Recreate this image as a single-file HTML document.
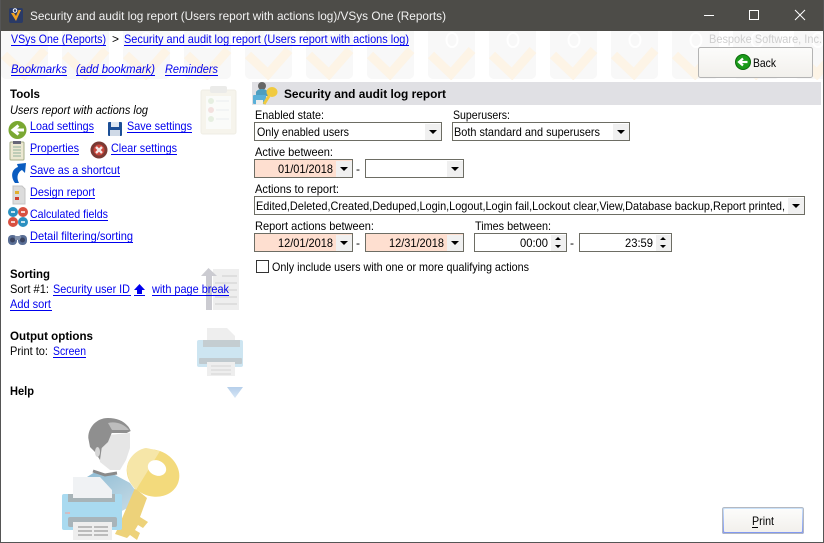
<!DOCTYPE html>
<html><head><meta charset="utf-8"><style>
html,body{margin:0;padding:0;background:#fff;overflow:hidden}
svg{display:block}
text{font-family:"Liberation Sans",sans-serif;font-size:12px;fill:#000}
.l{fill:#0000ee}.b{font-weight:bold}.i{font-style:italic}
.c rect{shape-rendering:crispEdges}
</style></head><body>
<svg width="824" height="543" viewBox="0 0 824 543" xmlns="http://www.w3.org/2000/svg">
<defs>
<pattern id="t" x="1" y="31" width="61" height="49" patternUnits="userSpaceOnUse">
<rect x="0" y="-4" width="47" height="52" rx="5" fill="#f8f8f8"/>
<path d="M3 24L23 43L44 19" fill="none" stroke="#fdf4e6" stroke-width="9"/>
<ellipse cx="24" cy="9" rx="5.500" ry="7" fill="none" stroke="#fff" stroke-width="2"/>
</pattern>
<linearGradient id="pb" x1="0" y1="0" x2="0" y2="1"><stop offset="0" stop-color="#cfe6fb"/><stop offset="1" stop-color="#7d94f0"/></linearGradient>
<linearGradient id="bg" x1="0" y1="0" x2="0" y2="1"><stop offset="0" stop-color="#fcfcfb"/><stop offset="1" stop-color="#f2f0ec"/></linearGradient>
<linearGradient id="sh" x1="0" y1="0" x2="1" y2="1"><stop offset="0" stop-color="#88b8d2"/><stop offset="1" stop-color="#c8dce6"/></linearGradient>
<linearGradient id="tri" x1="0" y1="0" x2="0" y2="1"><stop offset="0" stop-color="#b6cfea"/><stop offset="1" stop-color="#d6e6f6"/></linearGradient>
</defs>
<rect width="824" height="543" fill="#fff"/>
<rect x="0" y="31" width="824" height="49" fill="url(#t)"/>
<rect width="824" height="31" fill="#4d4c48"/>
<rect x="0" y="0" width="1" height="543" fill="#555"/>
<rect x="823" y="0" width="1" height="543" fill="#555"/>
<rect x="0" y="542" width="824" height="1" fill="#555"/>
<!-- title -->
<rect x="9" y="8" width="14" height="15" rx="2" fill="#2a3a66"/>
<path d="M11 13 L16 21 L21 10 L18.500 10 L16 16 L14 13Z" fill="#f0a020"/>
<circle cx="15" cy="10.500" r="1.800" fill="none" stroke="#fff"/>
<text x="30" y="20" textLength="416" lengthAdjust="spacingAndGlyphs" style="fill:#f2f2f2">Security and audit log report (Users report with actions log)/VSys One (Reports)</text>
<path d="M704 15.500H714" stroke="#fff" fill="none"/>
<rect x="749.500" y="10.500" width="9" height="9" fill="none" stroke="#fff"/>
<path d="M795 10L805 20M805 10L795 20" stroke="#fff" fill="none"/>
<!-- top links -->
<text x="11" y="43" class="l" textLength="95" lengthAdjust="spacingAndGlyphs">VSys One (Reports)</text>
<text x="112" y="43">&gt;</text>
<text x="124" y="43" class="l" textLength="285" lengthAdjust="spacingAndGlyphs">Security and audit log report (Users report with actions log)</text>
<text x="709" y="43" textLength="113" lengthAdjust="spacingAndGlyphs" style="fill:#cfcfcf">Bespoke Software, Inc.</text>
<text x="11" y="73" class="l i" textLength="56" lengthAdjust="spacingAndGlyphs">Bookmarks</text>
<text x="76" y="73" class="l i" textLength="79" lengthAdjust="spacingAndGlyphs">(add bookmark)</text>
<text x="165" y="73" class="l i" textLength="53" lengthAdjust="spacingAndGlyphs">Reminders</text>
<!-- back -->
<rect x="698.500" y="47.500" width="114" height="30" rx="2" fill="url(#bg)" stroke="#b4b4b4"/>
<circle cx="743" cy="62" r="7.500" fill="#1a9a1a" stroke="#0b6b0b"/>
<path d="M747.500 62H740M743 58.500L739 62L743 65.500" stroke="#fff" stroke-width="2.200" fill="none"/>
<text x="753" y="67" textLength="23" lengthAdjust="spacingAndGlyphs">Back</text>
<!-- left watermarks -->
<g opacity=".5">
<rect x="201" y="90" width="35" height="44" rx="2" fill="#efeadb" stroke="#e0dccb"/>
<rect x="210" y="86" width="17" height="7" rx="2" fill="#d8d8d4"/>
<rect x="206" y="96" width="25" height="33" fill="#f7f9f4"/>
<circle cx="211" cy="101" r="3" fill="#cfe0c4"/><circle cx="211" cy="110" r="3" fill="#e8c4c0"/><circle cx="211" cy="119" r="3" fill="#cfe0c4"/>
<path d="M216 101H229M216 110H229M216 119H229" stroke="#d4dde0"/>
</g>
<path d="M213 269H239V310H213Z" fill="#eeeeee"/>
<path d="M215 283H237M215 290H237M215 297H237M215 304H237M222 276H237" stroke="#dedede" stroke-width="2"/>
<path d="M206 310V276H201L208.500 268L217 276H212V310Z" fill="#cbcbd1"/>
<path d="M207 328H227L235 336V345H207Z" fill="#eeeeee"/>
<rect x="197" y="340" width="46" height="27" rx="2" fill="#cde5f1"/>
<rect x="203" y="340" width="37" height="7" fill="#c4cdd1"/>
<rect x="199" y="358" width="43" height="6" rx="1" fill="#c0cacf"/>
<rect x="207" y="362" width="28" height="14" fill="#eeeeee"/>
<path d="M211 366H231M211 370H231M211 374H231" stroke="#d4d4d4"/>
<path d="M227 387H243L235 398Z" fill="url(#tri)"/>
<!-- left text -->
<text x="10" y="98" class="b" textLength="30" lengthAdjust="spacingAndGlyphs">Tools</text>
<text x="10" y="114" class="i" textLength="138" lengthAdjust="spacingAndGlyphs">Users report with actions log</text>
<circle cx="17.500" cy="130" r="9" fill="#7aa832"/>
<path d="M24 130H15M18.500 125.500L13 130L18.500 134.500" stroke="#fff" stroke-width="3" fill="none"/>
<rect x="108" y="122" width="14" height="14" rx="1" fill="#1c4f96"/><rect x="111" y="122" width="8" height="5" fill="#dfe8f2"/><rect x="110" y="130" width="10" height="6" fill="#cfd9e6"/>
<text x="30" y="130" class="l" textLength="64" lengthAdjust="spacingAndGlyphs">Load settings</text>
<text x="127" y="130" class="l" textLength="65" lengthAdjust="spacingAndGlyphs">Save settings</text>
<rect x="10" y="142" width="14" height="18" rx="1" fill="#ece8d2" stroke="#a4ad88"/><rect x="13" y="141" width="8" height="3" fill="#667"/>
<path d="M13 147H21M13 150H21M13 153H21M13 156H21" stroke="#8fb09c"/>
<text x="30" y="152" class="l" textLength="49" lengthAdjust="spacingAndGlyphs">Properties</text>
<circle cx="99" cy="150" r="8.500" fill="#7a3a34"/><circle cx="99" cy="150" r="5.500" fill="#c9463c"/>
<path d="M96 147L102 153M102 147L96 153" stroke="#f3e8e6" stroke-width="2.400"/>
<text x="111" y="152" class="l" textLength="66" lengthAdjust="spacingAndGlyphs">Clear settings</text>
<path d="M15 183C10 176 12 169 18 167L17 164L26 163L25 173L22 170C18 172 16 177 19 183Z" fill="#0a5cc0"/>
<text x="30" y="174" class="l" textLength="90" lengthAdjust="spacingAndGlyphs">Save as a shortcut</text>
<path d="M13 186H22L25 189V204H13Z" fill="#dcdcdc" stroke="#c4c4c4"/>
<rect x="15" y="191" width="4" height="3" fill="#e0b030"/><rect x="15" y="197" width="4" height="3" fill="#d04030"/>
<text x="30" y="196" class="l" textLength="65" lengthAdjust="spacingAndGlyphs">Design report</text>
<circle cx="13" cy="212" r="5" fill="#2a90c0"/><circle cx="23" cy="212" r="5" fill="#d85040"/><circle cx="13" cy="222" r="5" fill="#d85040"/><circle cx="23" cy="222" r="5" fill="#2a90c0"/>
<path d="M11 212H15M21 212H25M11 222H15M21 222H25" stroke="#fff" stroke-width="1.500"/>
<text x="30" y="218" class="l" textLength="78" lengthAdjust="spacingAndGlyphs">Calculated fields</text>
<rect x="8" y="235" width="9" height="10" rx="4" fill="#5a6f96"/><rect x="18" y="235" width="9" height="10" rx="4" fill="#5a6f96"/><rect x="15" y="236" width="6" height="4" fill="#8090ac"/>
<circle cx="12.500" cy="240" r="2.500" fill="#3a4360"/><circle cx="22.500" cy="240" r="2.500" fill="#3a4360"/>
<text x="30" y="240" class="l" textLength="103" lengthAdjust="spacingAndGlyphs">Detail filtering/sorting</text>
<text x="10" y="278" class="b" textLength="40" lengthAdjust="spacingAndGlyphs">Sorting</text>
<text x="10" y="293" textLength="39" lengthAdjust="spacingAndGlyphs">Sort #1:</text>
<text x="53" y="293" class="l" textLength="77" lengthAdjust="spacingAndGlyphs">Security user ID</text>
<path d="M139.500 284L145 290H142V294H137V290H134Z" fill="#0000ee"/>
<text x="152" y="293" class="l" textLength="77" lengthAdjust="spacingAndGlyphs">with page break</text>
<text x="10" y="308" class="l" textLength="41" lengthAdjust="spacingAndGlyphs">Add sort</text>
<text x="10" y="340" class="b" textLength="83" lengthAdjust="spacingAndGlyphs">Output options</text>
<text x="10" y="355" textLength="38" lengthAdjust="spacingAndGlyphs">Print to:</text>
<text x="53" y="355" class="l" textLength="33" lengthAdjust="spacingAndGlyphs">Screen</text>
<text x="10" y="395" class="b" textLength="24" lengthAdjust="spacingAndGlyphs">Help</text>
<!-- underlines -->
<path stroke="#0000ee" fill="none" shape-rendering="crispEdges" d="M11 45.500H106M124 45.500H409M11 75.500H67M76 75.500H155M165 75.500H218M30 132.500H94M127 132.500H192M30 154.500H79M111 154.500H177M30 176.500H120M30 198.500H95M30 220.500H108M30 242.500H133M53 295.500H131M134 295.500H145M152 295.500H229M10 310.500H52M53 357.500H86"/>
<!-- person/key art -->
<path d="M72 495L87 477L95 472L115 475L130 483L135 490L137 495L133 505L120 512Z" fill="url(#sh)"/>
<path d="M93 471L105 475L117 473" stroke="#8a8a8a" stroke-width="3" fill="none"/>
<path d="M108 435L130 433L130 448L126 460L120 470L110 470L100 462L98 448Z" fill="#e6e6e6"/>
<path d="M88.300 438C88 428 96 418 108 418C118 418 127 422 130.700 431L126.700 433L111.700 433L108 442L101.700 448L100 460L95 452L90 447Z" fill="#8f8f8f"/>
<path d="M108 423C116 421 124 424 129 430L112 430Z" fill="#bdbdbd"/>
<ellipse cx="97.500" cy="452" rx="2.500" ry="5" fill="#d6d6d6"/>
<path d="M135 488L117 530L115 534L127 538L130 535L137 540L140 533L135 530L138 525L143 528L148 522L140 517L147 498Z" fill="#edd27a"/>
<ellipse cx="153" cy="473" rx="27" ry="23" transform="rotate(25 153 473)" fill="#f3da7c"/>
<path d="M127 468C128 457 138 449 146 448C152 449 158 451 160 451L136 490C130 484 127 476 127 468Z" fill="#f6e6a8"/>
<ellipse cx="157" cy="468" rx="9.500" ry="7.500" transform="rotate(25 157 468)" fill="#fff"/>
<rect x="62" y="494" width="60" height="36" rx="2" fill="#a9daf0"/>
<rect x="68" y="494" width="47" height="8" fill="#a8b4b8"/>
<path d="M73 477H100L112 490V498H73Z" fill="#f0f2f4"/>
<rect x="68" y="517" width="49" height="10" rx="2" fill="#a8b4ba"/>
<rect x="73" y="522" width="39" height="18" fill="#eeeeee"/>
<path d="M78 527H92M94 527H108M78 531H92M94 531H108M78 535H92M94 535H108" stroke="#bbbbbb" stroke-width="2"/>
<rect x="65" y="512" width="3" height="2" fill="#c8c0c8"/><rect x="68" y="512" width="2" height="2" fill="#e0b8b8"/>
<!-- right panel -->
<rect x="252" y="82" width="569" height="23" fill="#e0e0e4"/>
<circle cx="262" cy="86" r="4" fill="#666"/><path d="M256 92C258 88 266 88 268 92V96H256Z" fill="#4d9ec0"/>
<rect x="253" y="95" width="13" height="9" rx="1" fill="#5ab0d8"/><rect x="256" y="100" width="7" height="5" fill="#eee"/>
<ellipse cx="272" cy="92" rx="5.500" ry="5" fill="#f0ca40"/><path d="M269 96L264 104" stroke="#f0ca40" stroke-width="3"/>
<text x="284" y="98" class="b" textLength="162" lengthAdjust="spacingAndGlyphs">Security and audit log report</text>
<g class="c">
<text x="255" y="119" textLength="69" lengthAdjust="spacingAndGlyphs">Enabled state:</text>
<text x="453" y="119" textLength="57" lengthAdjust="spacingAndGlyphs">Superusers:</text>
<rect x="254.500" y="122.500" width="187" height="18" fill="#fff" stroke="#6d6d64"/>
<rect x="425" y="124" width="16" height="16" fill="#f0f0f0"/>
<text x="257" y="136" textLength="92" lengthAdjust="spacingAndGlyphs">Only enabled users</text>
<rect x="452.500" y="122.500" width="177" height="18" fill="#fff" stroke="#6d6d64"/>
<rect x="613" y="124" width="16" height="16" fill="#f0f0f0"/>
<text x="454" y="136" textLength="146" lengthAdjust="spacingAndGlyphs">Both standard and superusers</text>
<text x="255" y="156" textLength="78" lengthAdjust="spacingAndGlyphs">Active between:</text>
<rect x="254.500" y="159.500" width="98" height="18" fill="#fedfd0" stroke="#6d6d64"/>
<rect x="336" y="161" width="16" height="16" fill="#f0f0f0"/>
<text x="278" y="173" textLength="55" lengthAdjust="spacingAndGlyphs">01/01/2018</text>
<text x="356" y="173">-</text>
<rect x="365.500" y="159.500" width="98" height="18" fill="#fff" stroke="#6d6d64"/>
<rect x="447" y="161" width="16" height="16" fill="#f0f0f0"/>
<text x="255" y="193" textLength="84" lengthAdjust="spacingAndGlyphs">Actions to report:</text>
<rect x="254.500" y="196.500" width="550" height="18" fill="#fff" stroke="#6d6d64"/>
<rect x="788" y="198" width="16" height="16" fill="#f0f0f0"/>
<text x="256" y="210" textLength="529" lengthAdjust="spacingAndGlyphs">Edited,Deleted,Created,Deduped,Login,Logout,Login fail,Lockout clear,View,Database backup,Report printed,</text>
<text x="255" y="230" textLength="119" lengthAdjust="spacingAndGlyphs">Report actions between:</text>
<text x="475" y="230" textLength="76" lengthAdjust="spacingAndGlyphs">Times between:</text>
<rect x="254.500" y="233.500" width="98" height="18" fill="#fedfd0" stroke="#6d6d64"/>
<rect x="336" y="235" width="16" height="16" fill="#f0f0f0"/>
<text x="278" y="247" textLength="55" lengthAdjust="spacingAndGlyphs">12/01/2018</text>
<text x="356" y="247">-</text>
<rect x="365.500" y="233.500" width="98" height="18" fill="#fedfd0" stroke="#6d6d64"/>
<rect x="447" y="235" width="16" height="16" fill="#f0f0f0"/>
<text x="389" y="247" textLength="55" lengthAdjust="spacingAndGlyphs">12/31/2018</text>
<rect x="474.500" y="233.500" width="92" height="18" fill="#fff" stroke="#6d6d64"/>
<rect x="551" y="235" width="15" height="16" fill="#f0f0f0"/>
<text x="520" y="247" textLength="28" lengthAdjust="spacingAndGlyphs">00:00</text>
<text x="570" y="247">-</text>
<rect x="579.500" y="233.500" width="92" height="18" fill="#fff" stroke="#6d6d64"/>
<rect x="656" y="235" width="15" height="16" fill="#f0f0f0"/>
<text x="625" y="247" textLength="28" lengthAdjust="spacingAndGlyphs">23:59</text>
<rect x="256.500" y="260.500" width="12" height="12" fill="#fff" stroke="#333"/>
<text x="272" y="271" textLength="257" lengthAdjust="spacingAndGlyphs">Only include users with one or more qualifying actions</text>
</g>
<!-- arrows -->
<path fill="#000" d="M429 130h8l-4 4zM617 130h8l-4 4zM340 167h8l-4 4zM451 167h8l-4 4zM792 204h8l-4 4zM340 241h8l-4 4zM451 241h8l-4 4z"/>
<path fill="#000" d="M555 240h6l-3-3zM555 245h6l-3 3zM660 240h6l-3-3zM660 245h6l-3 3z"/>
<!-- print -->
<rect x="722" y="507" width="82" height="27" rx="2" fill="url(#pb)"/>
<rect x="724" y="509" width="78" height="23" rx="1" fill="url(#bg)"/>
<rect x="722.500" y="507.500" width="81" height="26" rx="2" fill="none" stroke="#b4b8c0"/>
<text x="752" y="525" textLength="22" lengthAdjust="spacingAndGlyphs">Print</text>
<path d="M752 527.500H758" stroke="#000" shape-rendering="crispEdges"/>
</svg>
</body></html>
